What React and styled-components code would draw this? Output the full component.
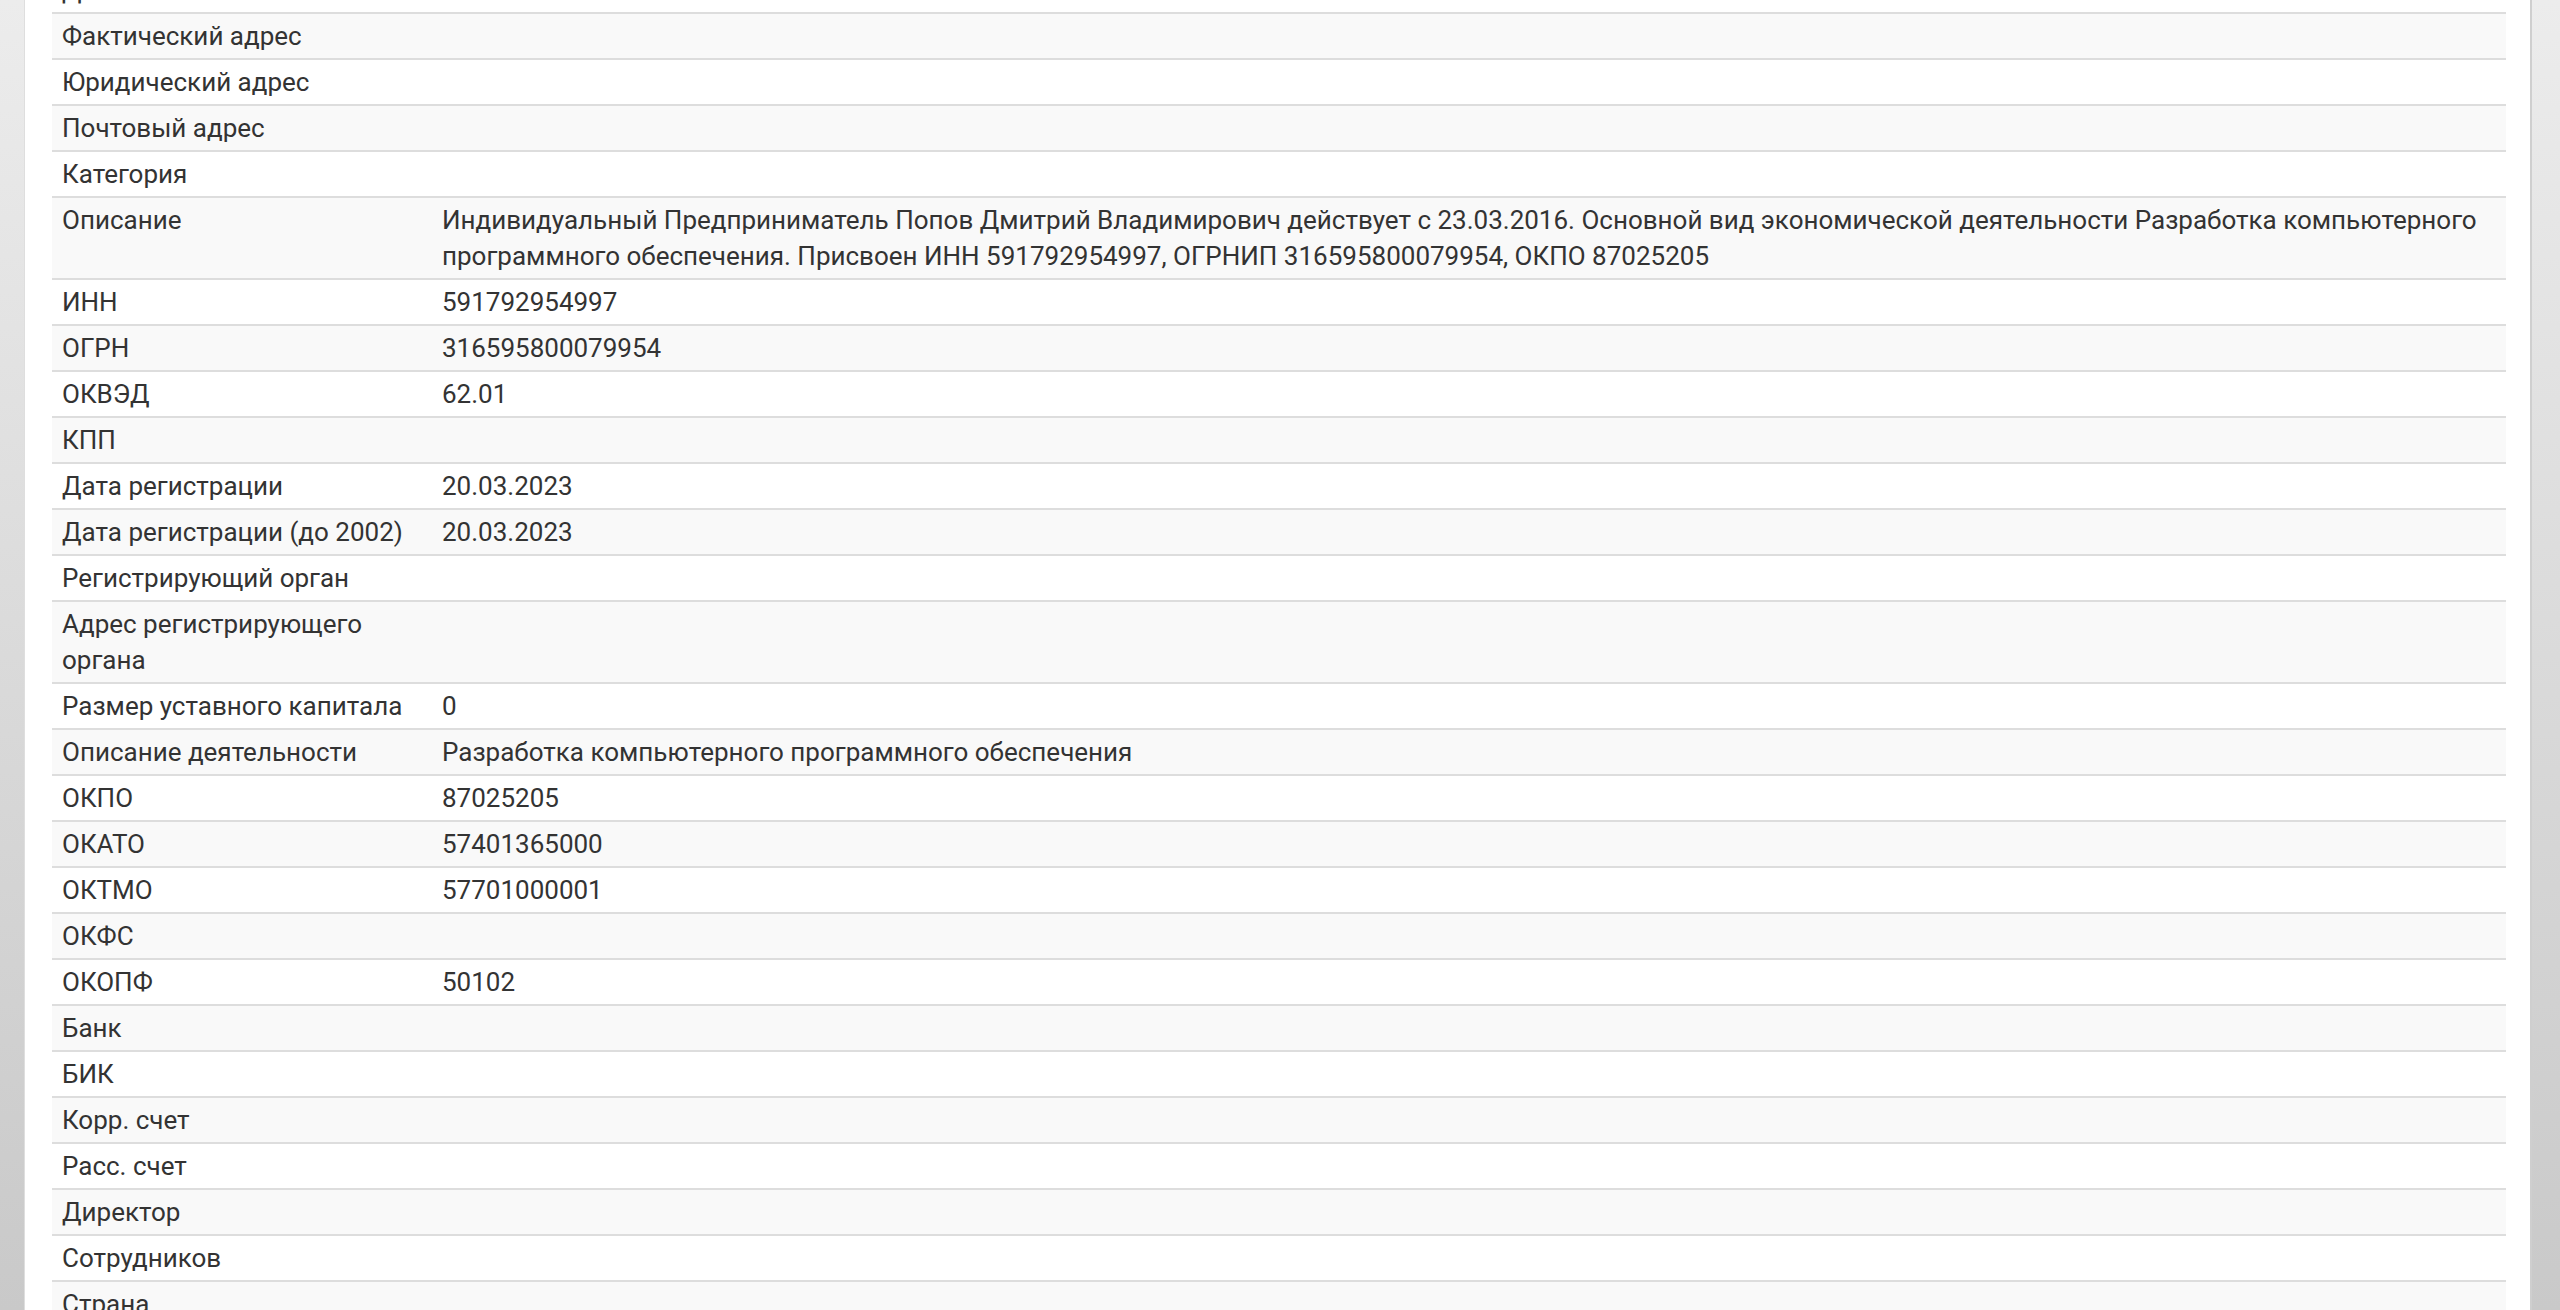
import styled, { createGlobalStyle } from "styled-components";

const GlobalStyle = createGlobalStyle`
  html, body {
    margin: 0;
    height: 100%;
    overflow: hidden;
  }
  body {
    background: linear-gradient(to bottom, #ececec 0%, #dadada 50%, #c9c9c9 100%);
    font-family: Roboto, "Noto Sans", "Liberation Sans", sans-serif;
    color: #333;
  }
`;

const rows = [
  { label: "Деятельность", value: "" },
  { label: "Фактический адрес", value: "" },
  { label: "Юридический адрес", value: "" },
  { label: "Почтовый адрес", value: "" },
  { label: "Категория", value: "" },
  {
    label: "Описание",
    value:
      "Индивидуальный Предприниматель Попов Дмитрий Владимирович действует с 23.03.2016. Основной вид экономической деятельности Разработка компьютерного программного обеспечения. Присвоен ИНН 591792954997, ОГРНИП 316595800079954, ОКПО 87025205",
  },
  { label: "ИНН", value: "591792954997" },
  { label: "ОГРН", value: "316595800079954" },
  { label: "ОКВЭД", value: "62.01" },
  { label: "КПП", value: "" },
  { label: "Дата регистрации", value: "20.03.2023" },
  { label: "Дата регистрации (до 2002)", value: "20.03.2023" },
  { label: "Регистрирующий орган", value: "" },
  { label: "Адрес регистрирующего органа", value: "" },
  { label: "Размер уставного капитала", value: "0" },
  { label: "Описание деятельности", value: "Разработка компьютерного программного обеспечения" },
  { label: "ОКПО", value: "87025205" },
  { label: "ОКАТО", value: "57401365000" },
  { label: "ОКТМО", value: "57701000001" },
  { label: "ОКФС", value: "" },
  { label: "ОКОПФ", value: "50102" },
  { label: "Банк", value: "" },
  { label: "БИК", value: "" },
  { label: "Корр. счет", value: "" },
  { label: "Расс. счет", value: "" },
  { label: "Директор", value: "" },
  { label: "Сотрудников", value: "" },
  { label: "Страна", value: "" },
  { label: "Регион", value: "" },
];

export default function App() {
  return (
    <>
      <GlobalStyle />
      <Page>
        <Panel>
          <InfoTable>
            <colgroup>
              <col style={{ width: 380 }} />
              <col />
            </colgroup>
            <tbody>
              {rows.map((r, i) => (
                <Row key={r.label} $striped={i % 2 === 1}>
                  <Cell>{r.label}</Cell>
                  <Cell>{r.value}</Cell>
                </Row>
              ))}
            </tbody>
          </InfoTable>
        </Panel>
      </Page>
    </>
  );
}

const Page = styled.div`
  margin-top: -34px;
  padding: 0 28px 0 24px;
`;

const Panel = styled.div`
  background: #fff;
  border-left: 1px solid #dedede;
  border-right: 2px solid #cfcfcf;
  padding: 0 24px 0 27px;
`;

const InfoTable = styled.table`
  width: 100%;
  table-layout: fixed;
  border-collapse: collapse;
  border-spacing: 0;
`;

const Row = styled.tr`
  background: ${(p) => (p.$striped ? "#f9f9f9" : "#fff")};
`;

const Cell = styled.td`
  padding: 4px 10px;
  border-top: 2px solid #dddddd;
  font-size: 26px;
  line-height: 36px;
  vertical-align: top;
  text-align: left;
`;
